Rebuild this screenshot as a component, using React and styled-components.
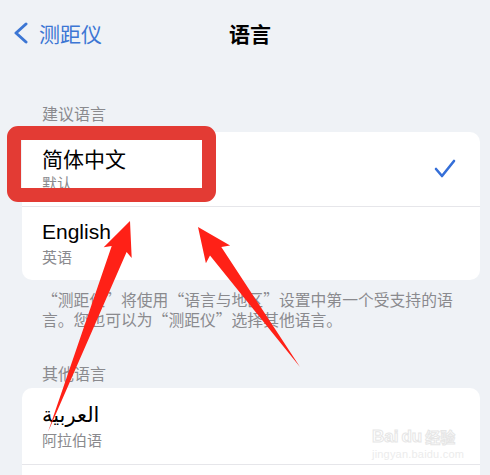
import React from "react";
import styled, { createGlobalStyle } from "styled-components";

const Global = createGlobalStyle`
  html, body { margin: 0; padding: 0; }
  body {
    background: #eff2f6;
    font-family: "Liberation Sans", "Noto Sans CJK SC", sans-serif;
    -webkit-font-smoothing: antialiased;
  }
`;

const Page = styled.div`
  position: relative;
  width: 490px;
  height: 475px;
  overflow: hidden;
  background: #eff2f6;
`;

const Nav = styled.div`
  height: 66px;
  display: grid;
  grid-template-columns: 1fr auto 1fr;
  align-items: center;
  padding: 0 13px;
`;

const Back = styled.div`
  display: flex;
  align-items: center;
  gap: 10px;
  color: #3c76d4;
  font-family: "Noto Sans CJK SC", sans-serif;
  font-size: 21px;
  line-height: 26px;
`;

const Title = styled.div`
  margin-left: 10px;
  font-family: "Noto Sans CJK SC", sans-serif;
  font-weight: 700;
  font-size: 21px;
  line-height: 26px;
  color: #000;
`;

const SectionHeader = styled.div`
  margin: ${(p) => p.$top}px 0 0;
  padding: 0 42px;
  font-family: "Noto Sans CJK SC", sans-serif;
  font-size: 16px;
  line-height: 20px;
  color: #8a8a8e;
`;

const Card = styled.div`
  margin: ${(p) => p.$top}px 10px 0 22px;
  background: #ffffff;
  border-radius: 10px;
  overflow: hidden;
`;

const Row = styled.div`
  height: ${(p) => p.$h || 74}px;
  display: flex;
  align-items: center;
  padding: 0 24px 0 20px;
  box-sizing: border-box;
  & + & { border-top: 1px solid #e6e6ea; }
`;

const RowText = styled.div`
  flex: 1;
  display: flex;
  flex-direction: column;
  padding-bottom: 2px;
`;

const RowTitle = styled.div`
  font-size: 21px;
  line-height: 26px;
  color: #000;
  font-family: ${(p) => (p.$cjk ? '"Noto Sans CJK SC", sans-serif' : '"Liberation Sans", "DejaVu Sans", "Noto Sans CJK SC", sans-serif')};
`;

const RowSub = styled.div`
  margin-top: 3px;
  font-family: "Noto Sans CJK SC", sans-serif;
  font-size: 15px;
  line-height: 18px;
  color: #8a8a8e;
`;

const Footer = styled.div`
  padding: 10px 28px 0 42px;
  font-family: "Noto Sans CJK SC", sans-serif;
  font-size: 15.8px;
  line-height: 20px;
  color: #8a8a8e;
`;

const Highlight = styled.div`
  position: absolute;
  left: 7px;
  top: 126px;
  width: 209px;
  height: 76px;
  box-sizing: border-box;
  border: 14px solid #e33b34;
  border-radius: 11px;
  pointer-events: none;
`;

const Overlay = styled.svg`
  position: absolute;
  inset: 0;
  pointer-events: none;
`;

const Watermark = styled.div`
  position: absolute;
  left: 372px;
  top: 428px;
  display: flex;
  flex-direction: column;
  align-items: flex-start;
  color: transparent;
  pointer-events: none;
`;

const WmTop = styled.div`
  display: flex;
  align-items: flex-end;
  gap: 3px;
  font-family: "Liberation Sans", sans-serif;
  font-weight: 700;
  font-size: 17px;
  line-height: 18px;
  -webkit-text-stroke: 1px #e6e6e6;
`;

const WmCjk = styled.span`
  font-family: "Noto Sans CJK SC", sans-serif;
  font-size: 15px;
`;

const WmUrl = styled.div`
  margin-top: 2px;
  font-family: "Liberation Sans", sans-serif;
  font-size: 11px;
  line-height: 12px;
  letter-spacing: 0.2px;
  color: #ececec;
`;

function arrowPoints(T, P, headLen, h, s) {
  const dx = P[0] - T[0];
  const dy = P[1] - T[1];
  const L = Math.hypot(dx, dy);
  const ux = dx / L, uy = dy / L;
  const px = -uy, py = ux;
  const B = [P[0] - headLen * ux, P[1] - headLen * uy];
  const pt = (c, k) => `${(c[0] + k * px).toFixed(1)},${(c[1] + k * py).toFixed(1)}`;
  const W = [B[0] - 4 * ux, B[1] - 4 * uy];
  return [
    `${T[0]},${T[1]}`,
    pt(B, -s),
    pt(W, -h),
    `${P[0]},${P[1]}`,
    pt(W, h),
    pt(B, s),
  ].join(" ");
}

const Check = () => (
  <svg width="22" height="20" viewBox="0 0 22 20">
    <polyline points="2,10 8,17 20,2" fill="none" stroke="#356fd8" strokeWidth="2.6" strokeLinecap="round" strokeLinejoin="round" />
  </svg>
);

const Chevron = () => (
  <svg width="16" height="22" viewBox="0 0 16 22">
    <polyline points="13,2 3,11 13,20" fill="none" stroke="#3c76d4" strokeWidth="3" strokeLinecap="round" strokeLinejoin="round" />
  </svg>
);

export default function App() {
  return (
    <Page>
      <Global />
      <Nav>
        <Back>
          <Chevron />
          <span>测距仪</span>
        </Back>
        <Title>语言</Title>
        <div />
      </Nav>

      <SectionHeader $top={37}>建议语言</SectionHeader>
      <Card $top={9}>
        <Row>
          <RowText>
            <RowTitle $cjk>简体中文</RowTitle>
            <RowSub>默认</RowSub>
          </RowText>
          <Check />
        </Row>
        <Row $h={74}>
          <RowText>
            <RowTitle>English</RowTitle>
            <RowSub>英语</RowSub>
          </RowText>
        </Row>
      </Card>
      <Footer>
        “测距仪”将使用“语言与地区”设置中第一个受支持的语言。您也可以为“测距仪”选择其他语言。
      </Footer>

      <SectionHeader $top={33}>其他语言</SectionHeader>
      <Card $top={5}>
        <Row $h={76}>
          <RowText>
            <RowTitle>العربية</RowTitle>
            <RowSub>阿拉伯语</RowSub>
          </RowText>
        </Row>
        <Row $h={76} />
      </Card>

      <Watermark>
        <WmTop>
          <span>Bai</span>
          <span>du</span>
          <WmCjk>经验</WmCjk>
        </WmTop>
        <WmUrl>jingyan.baidu.com</WmUrl>
      </Watermark>

      <Highlight />
      <Overlay width="490" height="475" viewBox="0 0 490 475">
        <polygon points={arrowPoints([48, 432], [130, 221], 30, 15, 8)} fill="#ff2117" />
        <polygon points={arrowPoints([300, 367], [198, 227], 30, 15, 7)} fill="#ff2117" />
      </Overlay>
    </Page>
  );
}
